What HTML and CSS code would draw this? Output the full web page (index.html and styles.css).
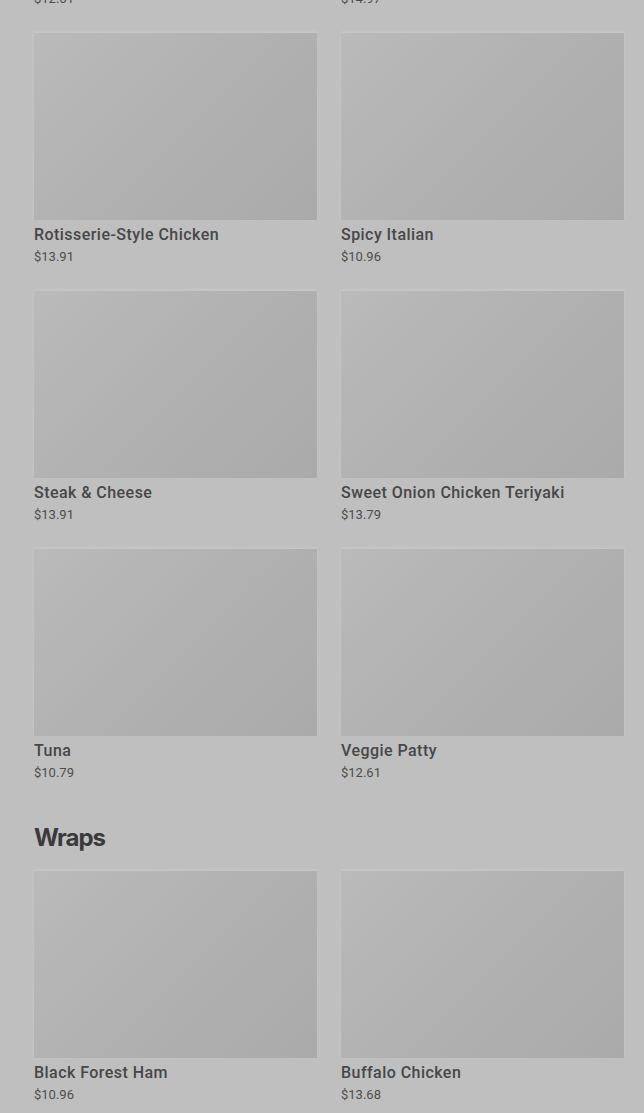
FILE: index.html
```html
<!DOCTYPE html>
<html lang="en">
<head>
    <meta charset="UTF-8">
    <meta name="viewport" content="width=device-width, initial-scale=1.0">
    <title>Menu</title>
    <link rel="stylesheet" href="styles.css">
</head>
<body>
    <div class="menu">
        <div class="grid">
            <div class="item">
                <div class="pic"></div>
                <h4>Cold Cut Combo</h4>
                <p>$12.61</p>
            </div>
            <div class="item">
                <div class="pic"></div>
                <h4>Oven Roasted Turkey</h4>
                <p>$14.97</p>
            </div>
            <div class="item">
                <div class="pic"></div>
                <h4>Rotisserie-Style Chicken</h4>
                <p>$13.91</p>
            </div>
            <div class="item">
                <div class="pic"></div>
                <h4>Spicy Italian</h4>
                <p>$10.96</p>
            </div>
            <div class="item">
                <div class="pic"></div>
                <h4>Steak &amp; Cheese</h4>
                <p>$13.91</p>
            </div>
            <div class="item">
                <div class="pic"></div>
                <h4>Sweet Onion Chicken Teriyaki</h4>
                <p>$13.79</p>
            </div>
            <div class="item">
                <div class="pic"></div>
                <h4>Tuna</h4>
                <p>$10.79</p>
            </div>
            <div class="item">
                <div class="pic"></div>
                <h4>Veggie Patty</h4>
                <p>$12.61</p>
            </div>
        </div>

        <h2>Wraps</h2>
        <div class="grid">
            <div class="item">
                <div class="pic"></div>
                <h4>Black Forest Ham</h4>
                <p>$10.96</p>
            </div>
            <div class="item">
                <div class="pic"></div>
                <h4>Buffalo Chicken</h4>
                <p>$13.68</p>
            </div>
        </div>
    </div>
</body>
</html>
```

FILE: styles.css
```css
*{
    margin: 0;
    padding: 0;
    box-sizing: border-box;
}
body{
    background-color: #bfbfbf;
    font-family: "Roboto", "Liberation Sans", sans-serif;
    overflow: hidden;
}
.menu{
    /* page is scrolled, the top row is cut off */
    margin-top: -225px;
    padding: 0 20px 40px 34px;
}
.grid{
    display: grid;
    grid-template-columns: 1fr 1fr;
    column-gap: 24px;
    row-gap: 23px;
}
.pic{
    height: 187px;
    background-image: linear-gradient(135deg, #bababa, #b1b1b1 50%, #aaaaaa);
    box-shadow: 0 -1px 3px rgba(255, 255, 255, 0.2);
}
.item h4{
    margin-top: 3px;
    font-size: 16px;
    line-height: 23px;
    font-weight: 500;
    letter-spacing: 0.45px;
    color: #474747;
}
.item p{
    font-size: 13px;
    line-height: 22px;
    color: #4d4d4d;
}
h2{
    margin: 38px 0 17px;
    font-family: "Inter", "Liberation Sans", sans-serif;
    font-size: 24px;
    line-height: 32px;
    font-weight: 700;
    letter-spacing: -1px;
    color: #3a3a3a;
}
```
